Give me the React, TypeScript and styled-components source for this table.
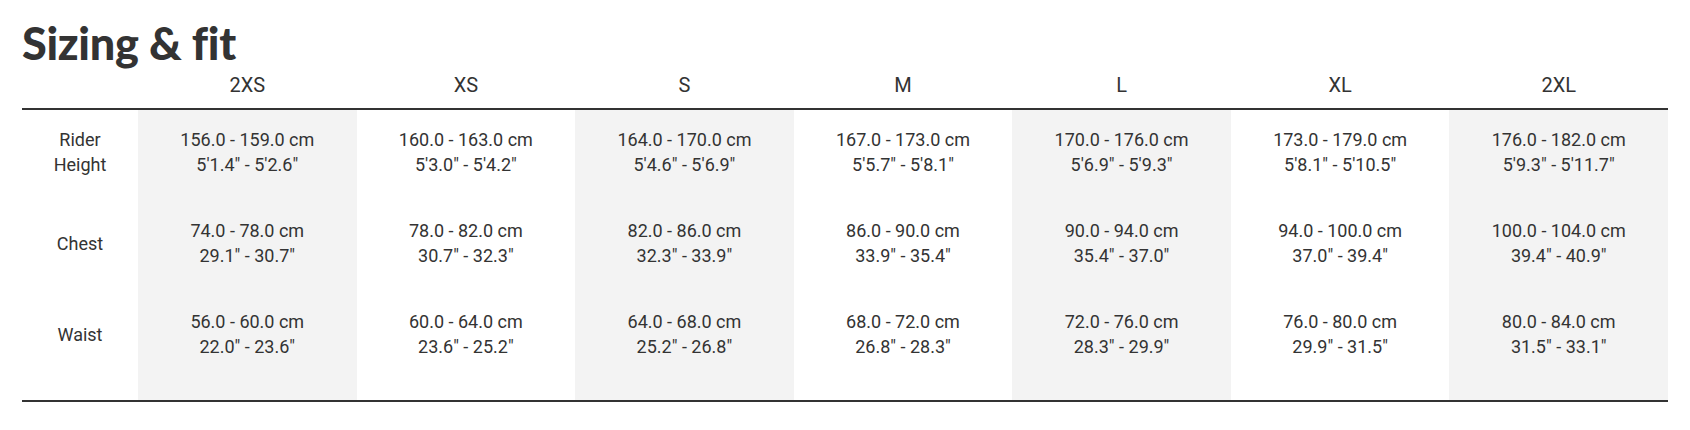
import React from "react";
import styled, { createGlobalStyle } from "styled-components";

const GlobalStyle = createGlobalStyle`
    html, body {
        margin: 0;
        padding: 0;
        background: #ffffff;
    }
`;

type Size = {
    name: string;
    height: [string, string];
    chest: [string, string];
    waist: [string, string];
};

const sizes: Size[] = [
    { name: "2XS", height: ["156.0 - 159.0 cm", `5'1.4" - 5'2.6"`], chest: ["74.0 - 78.0 cm", `29.1" - 30.7"`], waist: ["56.0 - 60.0 cm", `22.0" - 23.6"`] },
    { name: "XS", height: ["160.0 - 163.0 cm", `5'3.0" - 5'4.2"`], chest: ["78.0 - 82.0 cm", `30.7" - 32.3"`], waist: ["60.0 - 64.0 cm", `23.6" - 25.2"`] },
    { name: "S", height: ["164.0 - 170.0 cm", `5'4.6" - 5'6.9"`], chest: ["82.0 - 86.0 cm", `32.3" - 33.9"`], waist: ["64.0 - 68.0 cm", `25.2" - 26.8"`] },
    { name: "M", height: ["167.0 - 173.0 cm", `5'5.7" - 5'8.1"`], chest: ["86.0 - 90.0 cm", `33.9" - 35.4"`], waist: ["68.0 - 72.0 cm", `26.8" - 28.3"`] },
    { name: "L", height: ["170.0 - 176.0 cm", `5'6.9" - 5'9.3"`], chest: ["90.0 - 94.0 cm", `35.4" - 37.0"`], waist: ["72.0 - 76.0 cm", `28.3" - 29.9"`] },
    { name: "XL", height: ["173.0 - 179.0 cm", `5'8.1" - 5'10.5"`], chest: ["94.0 - 100.0 cm", `37.0" - 39.4"`], waist: ["76.0 - 80.0 cm", `29.9" - 31.5"`] },
    { name: "2XL", height: ["176.0 - 182.0 cm", `5'9.3" - 5'11.7"`], chest: ["100.0 - 104.0 cm", `39.4" - 40.9"`], waist: ["80.0 - 84.0 cm", `31.5" - 33.1"`] },
];

const rows: { label: string; key: "height" | "chest" | "waist" }[] = [
    { label: "Rider Height", key: "height" },
    { label: "Chest", key: "chest" },
    { label: "Waist", key: "waist" },
];

export default function App() {
    return (
        <>
            <GlobalStyle />
            <Page>
                <Title>Sizing &amp; fit</Title>
                <Table>
                    <HeadRow>
                        <HeadCell />
                        {sizes.map(s => (
                            <HeadCell key={s.name}>{s.name}</HeadCell>
                        ))}
                    </HeadRow>
                    {rows.map((row, r) => (
                        <BodyRow key={row.key} last={r === rows.length - 1}>
                            <Label>{row.label}</Label>
                            {sizes.map((s, i) => (
                                <Cell key={s.name} shaded={i % 2 === 0}>
                                    <span>{s[row.key][0]}</span>
                                    <span>{s[row.key][1]}</span>
                                </Cell>
                            ))}
                        </BodyRow>
                    ))}
                </Table>
            </Page>
        </>
    );
}

const Page = styled.div`
    padding: 21px 22px 0 22px;
    color: #333333;
    font-family: Roboto, "Liberation Sans", sans-serif;
`;

const Title = styled.h2`
    margin: 0;
    font-family: Lato, Inter, "Liberation Sans", sans-serif;
    font-weight: 900;
    font-size: 45px;
    line-height: 45px;
    letter-spacing: -0.3px;
    color: #333333;
`;

const Table = styled.div`
    margin-top: 7px;
    display: grid;
    grid-template-columns: 116px repeat(7, 1fr);
    border-bottom: 2px solid #333333;
`;

const HeadRow = styled.div`
    display: contents;
`;

const HeadCell = styled.div`
    padding-bottom: 11px;
    border-bottom: 2px solid #333333;
    text-align: center;
    font-size: 20px;
    line-height: 24px;
    height: 24px;
`;

const BodyRow = styled.div<{ last?: boolean }>`
    display: contents;

    & > div {
        padding-top: 17px;
        padding-bottom: ${({ last }) => (last ? "41px" : "24px")};
    }
`;

const Label = styled.div`
    display: flex;
    align-items: center;
    justify-content: center;
    text-align: center;
    padding-left: 18px;
    padding-right: 18px;
    font-size: 18px;
    line-height: 25px;
    box-sizing: border-box;
    height: 100%;
`;

const Cell = styled.div<{ shaded: boolean }>`
    display: flex;
    flex-direction: column;
    align-items: center;
    font-size: 18px;
    line-height: 25px;
    white-space: nowrap;
    background: ${({ shaded }) => (shaded ? "#f3f3f3" : "transparent")};
`;
